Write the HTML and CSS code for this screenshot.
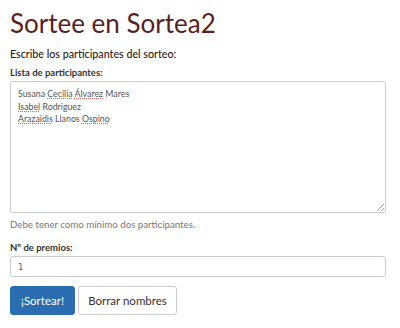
FILE: index.html
```html
<!DOCTYPE html>
<html>
  <head>
    <meta charset="UTF-8" />
    <title>Sortee en Sortea2</title>
    <link rel="stylesheet" href="styles.css">
  </head>
  <body>
    <!-- タイトル -->
    <h1 class="title">Sortee en Sortea2</h1>
    <h2 class="subtitle">Escribe los participantes del sorteo:</h2>

    <!-- 参加者リスト -->
    <label class="field-label">Lista de participantes:</label>
    <div class="names-box">
      <div>Susana <span class="misspelled">Cecilia</span> <span class="misspelled">Álvarez</span> Mares</div>
      <div><span class="misspelled">Isabel</span> Rodriguez</div>
      <div><span class="misspelled">Arazaidis</span> Llanos <span class="misspelled">Ospino</span></div>
      <span class="resize-grip"></span>
    </div>
    <p class="help">Debe tener como mínimo dos participantes.</p>

    <!-- 賞の数 -->
    <label class="field-label" for="prizes">Nº de premios:</label>
    <input class="prize-input" type="text" id="prizes" value="1" />

    <!-- ボタン -->
    <div class="actions">
      <button class="btn btn-primary">¡Sortear!</button>
      <button class="btn btn-default">Borrar nombres</button>
    </div>
  </body>
</html>
```

FILE: styles.css
```css
body {
  margin: 0;
  padding: 0 14px 0 10px;
  font-family: Lato, "Open Sans", sans-serif;
  color: #333;
  background: #fff;
}

.title {
  margin: 8px 0 0 0;
  font-size: 26px;
  font-weight: 400;
  line-height: 30px;
  color: #5a1f1f;
}

.subtitle {
  margin: 8px 0 0 0;
  font-size: 10.7px;
  font-weight: 500;
  line-height: 16px;
  color: #2a2020;
}

.field-label {
  display: block;
  margin: 5px 0 2px 0;
  font-size: 9.5px;
  font-weight: 700;
  line-height: 12px;
  color: #333;
}

/* テキストエリア風の入力欄 */
.names-box {
  position: relative;
  box-sizing: border-box;
  height: 132px;
  padding: 6px 7px;
  border: 1px solid #ccc;
  border-radius: 3px;
  font-size: 8.8px;
  line-height: 12.5px;
  color: #555;
}

.misspelled {
  text-decoration: underline dotted #d06060;
  text-decoration-thickness: 1px;
  text-underline-offset: 1px;
}

.resize-grip {
  position: absolute;
  right: 1px;
  bottom: 1px;
  width: 7px;
  height: 7px;
  background: linear-gradient(135deg, transparent 45%, #aaa 45%, #aaa 55%, transparent 55%, transparent 75%, #aaa 75%, #aaa 85%, transparent 85%);
}

.help {
  margin: 5px 0 12px 0;
  font-size: 9.7px;
  line-height: 12px;
  color: #777;
}

.prize-input {
  display: block;
  box-sizing: border-box;
  width: 100%;
  height: 21px;
  margin: 2px 0 0 0;
  padding: 2px 7px;
  border: 1px solid #ccc;
  border-radius: 3px;
  font-family: "DejaVu Sans Mono", monospace;
  font-size: 8.5px;
  color: #555;
}

.actions {
  display: flex;
  gap: 3px;
  margin-top: 9px;
}

.btn {
  height: 29px;
  padding: 0;
  border: 1px solid #ccc;
  border-radius: 3px;
  font-family: Lato, "Open Sans", sans-serif;
  font-size: 11.5px;
  white-space: nowrap;
  background: #fff;
  color: #333;
}

.btn-primary {
  width: 65px;
  background: #2a6db0;
  border-color: #2a6db0;
  color: #fff;
}

.btn-default {
  width: 99px;
}
```
